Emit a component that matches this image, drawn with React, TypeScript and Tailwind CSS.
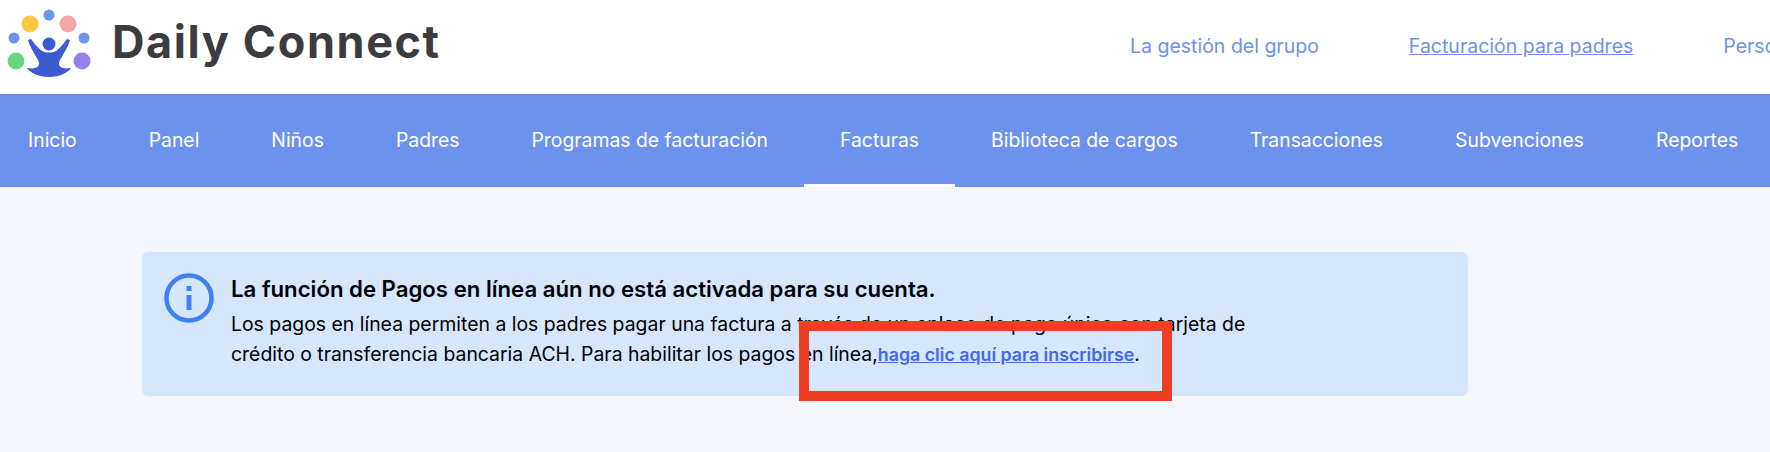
const navItems = [
  'Inicio',
  'Panel',
  'Niños',
  'Padres',
  'Programas de facturación',
  'Facturas',
  'Biblioteca de cargos',
  'Transacciones',
  'Subvenciones',
  'Reportes',
];

const Logo = () => (
  <svg width="98" height="84" viewBox="0 0 98 84" className="shrink-0 -mt-[10px]">
    <circle cx="49" cy="15" r="5.5" fill="#6f94ee" />
    <circle cx="30" cy="24" r="8.5" fill="#f9c942" />
    <circle cx="68" cy="24" r="8.5" fill="#f4a6a6" />
    <circle cx="14" cy="38" r="5.5" fill="#6f94ee" />
    <circle cx="84" cy="38" r="5.5" fill="#6f94ee" />
    <circle cx="16" cy="61" r="8.5" fill="#66d67f" />
    <circle cx="82" cy="61" r="8.5" fill="#9580ec" />
    <circle cx="49" cy="44" r="6.5" fill="#3b5bcf" />
    <path
      d="M28 40 L31 39 C34 43 38 48 42 51 C46 53 52 53 56 51 C60 48 64 43 67 39 L70 40 C68 47 63 55 60 60 C58 64 59 67 63 68 C66 69 69 68 71 68 C69 72 60 77 49 77 C38 77 29 72 27 68 C29 68 32 69 35 68 C39 67 40 64 38 60 C35 55 30 47 28 40 Z"
      fill="#3b5bcf"
    />
  </svg>
);

const InfoIcon = () => (
  <svg width="50" height="50" viewBox="0 0 50 50" className="shrink-0">
    <circle cx="25" cy="25" r="22.500" fill="none" stroke="#3f80f4" strokeWidth="4.500" />
    <rect x="22.500" y="13" width="5" height="5" fill="#3f80f4" />
    <rect x="22.500" y="22" width="5" height="15" fill="#3f80f4" />
  </svg>
);

export default function App() {
  return (
    <div className="w-[1770px] h-[452px] overflow-hidden bg-[#f4f6fb] font-['Inter',sans-serif]">
      {/* Top bar */}
      <header className="h-[94px] bg-white flex items-center">
        <div className="flex items-center w-[1130px] shrink-0">
          <Logo />
          <span className="ml-[14px] font-bold text-[45px] tracking-[1.6px] leading-none text-[#3b3b40] -mt-[11px]">
            Daily Connect
          </span>
        </div>
        <div className="flex items-center gap-[90px] text-[19.5px] text-[#6d92ee] whitespace-nowrap">
          <a>La gestión del grupo</a>
          <a className="underline">Facturación para padres</a>
          <a>Personal</a>
        </div>
      </header>

      {/* Main nav */}
      <nav className="h-[93px] bg-[#6d92ee] flex -ml-2 whitespace-nowrap">
        {navItems.map((item) => (
          <a
            key={item}
            className={
              item === 'Facturas'
                ? 'px-9 flex items-center text-white text-[19.38px] border-b-[3px] border-white pt-[3px]'
                : 'px-9 flex items-center text-white text-[19.38px] border-b-[3px] border-transparent pt-[3px]'
            }
          >
            {item}
          </a>
        ))}
      </nav>

      {/* Alert */}
      <div className="mt-[65px] ml-[142px] w-[1326px] h-[144px] rounded-md bg-[#d6e6fd] flex items-start pl-[22px] pt-[21px] relative">
        <InfoIcon />
        <div className="ml-[17px] w-[1030px] text-black">
          <p className="font-semibold text-[22.2px] leading-[34px] -mt-[1px]">
            La función de Pagos en línea aún no está activada para su cuenta.
          </p>
          <p className="text-[19.42px] leading-[30px] mt-[3px]">
            Los pagos en línea permiten a los padres pagar una factura a través de un enlace de pago único con tarjeta de crédito o transferencia bancaria ACH. Para habilitar los pagos en línea,
            <a className="font-semibold underline text-[17.8px] text-[#4169e8]">haga clic aquí para inscribirse</a>.
          </p>
        </div>
        {/* Red annotation */}
        <div className="absolute left-[657px] top-[69px] w-[373px] h-[80px] border-10 border-[#ec3f24]" />
      </div>
    </div>
  );
}
